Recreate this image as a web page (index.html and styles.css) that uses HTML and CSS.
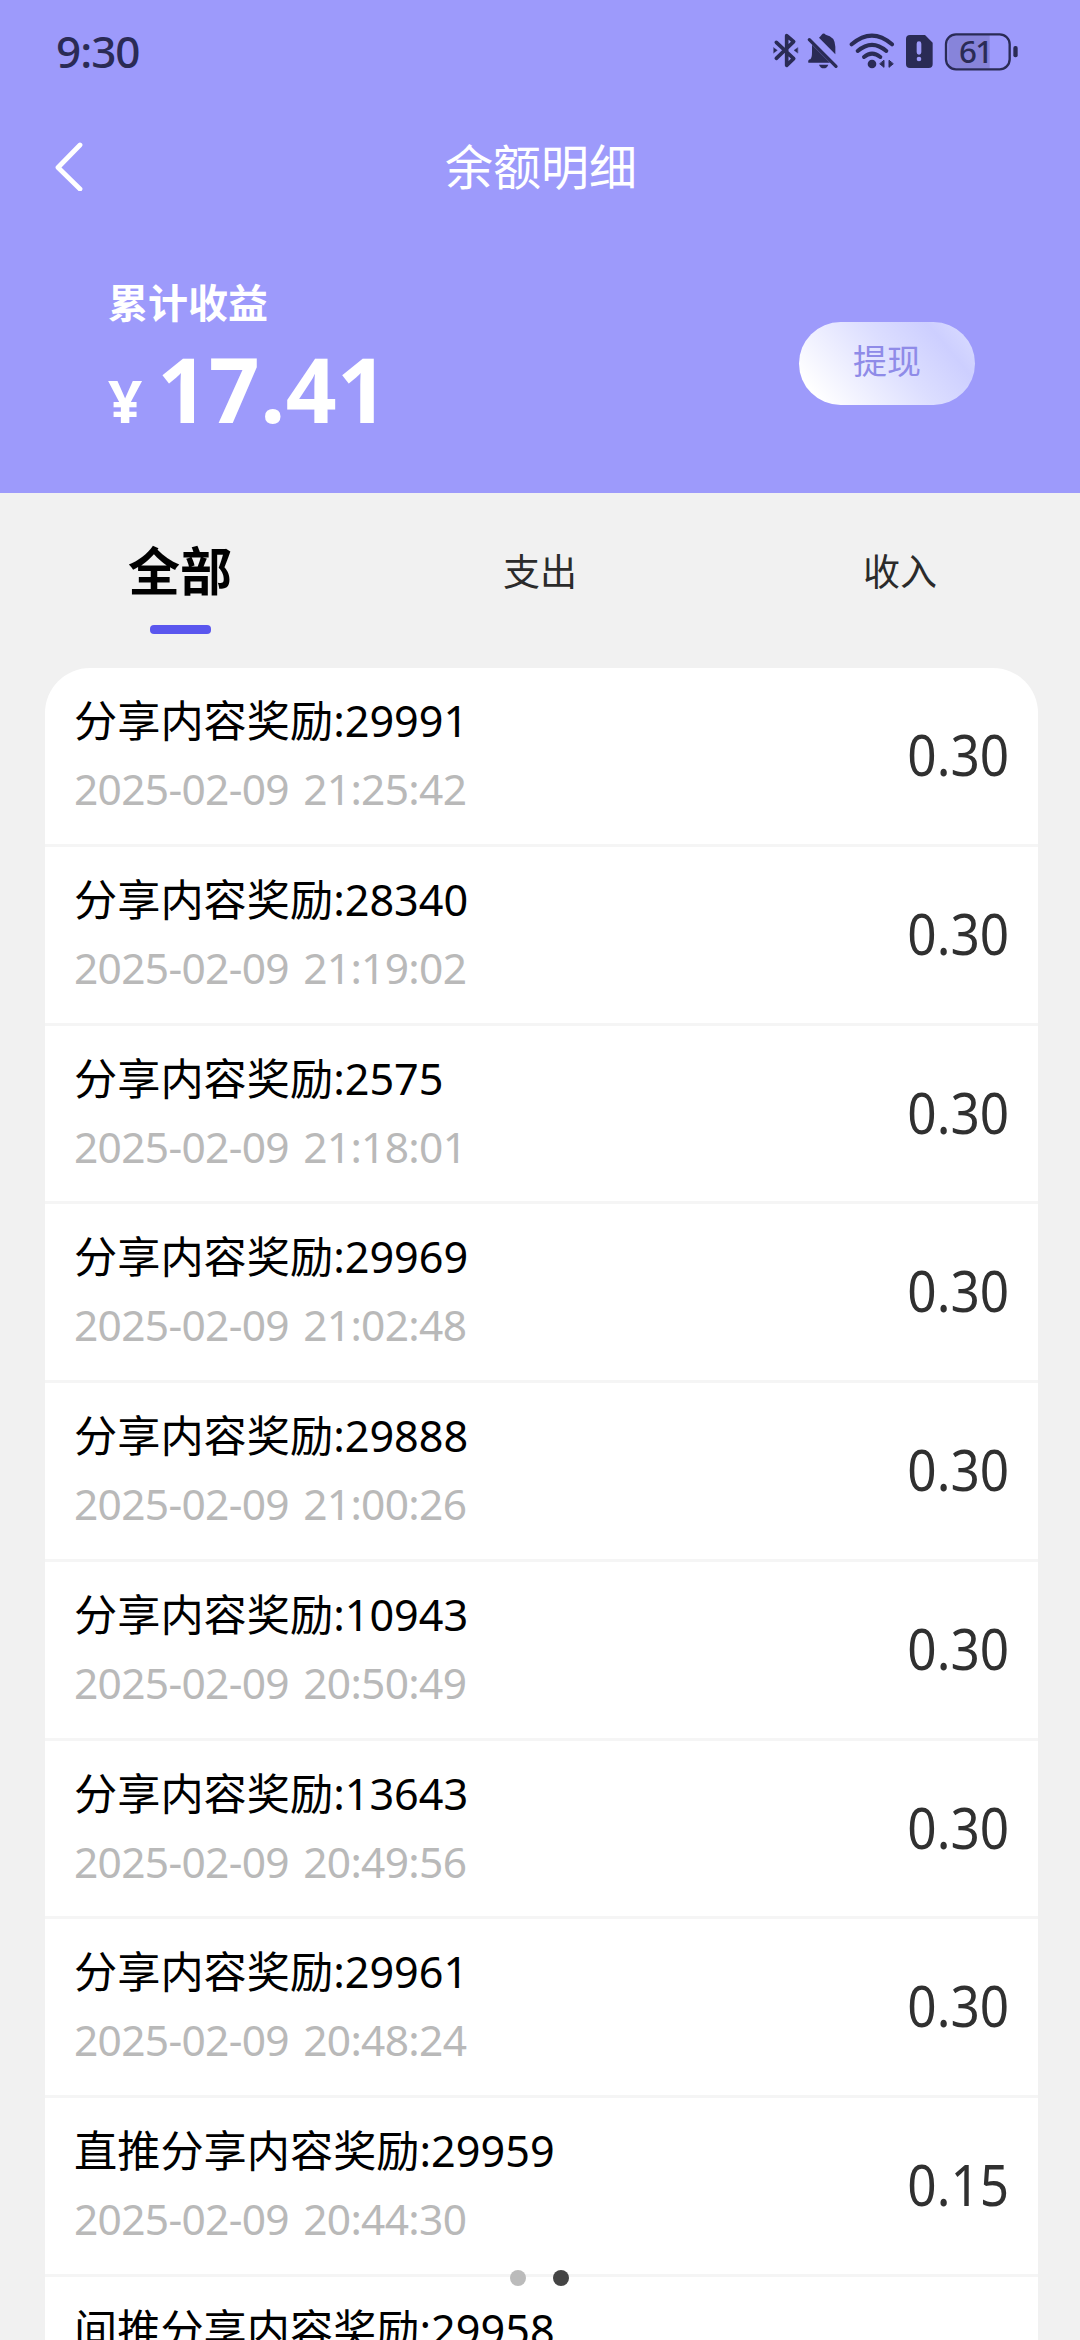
FILE: index.html
```html
<!DOCTYPE html>
<html lang="zh-CN">
<head>
<meta charset="utf-8">
<title>余额明细</title>
<link rel="stylesheet" href="styles.css">
</head>
<body>
<div class="screen">
  <header class="hero">
    <div class="status">
      <span class="clock">9:30</span>
      <svg class="status-icons" viewBox="0 0 750 120" width="250" height="40" fill="none" stroke="#2a2b55" stroke-linecap="round" stroke-linejoin="round">
        <g stroke-width="11">
          <path d="M10 34 62 83 41 103V14L62 32 10 82"/>
          <path d="M2 50 13 58 2 66ZM74 50 63 58 74 66Z" fill="#2a2b55" stroke-width="1"/>
        </g>
        <g fill="#2a2b55" stroke="none">
          <path d="M117 41 171 95H106Q104 86 112 85 117 80 117 64Z"/>
          <path d="M138 20Q143 16 146 11 152 4 158 11 186 16 187 47V70Z"/>
          <path d="M138 101H166Q162 112 152 112T138 101Z"/>
          <path d="M109 26 189 106" stroke="#2a2b55" stroke-width="10"/>
        </g>
        <g stroke-width="12">
          <path d="M236 40Q297-12 357 40"/>
          <path d="M254 60Q297 23 340 60"/>
          <path d="M273 78Q297 58 322 78"/>
          <circle cx="297" cy="99" r="13" fill="#2a2b55" stroke="none"/>
          <path d="M333 89V109L321 99ZM348 89V109L360 99Z" fill="#2a2b55" stroke-width="3"/>
        </g>
        <path d="M411 12H456L479 35V99Q479 111 467 111H411Q399 111 399 99V24Q399 12 411 12Z" fill="#2a2b55" stroke="none"/>
        <path d="M438 38V64M438 84V84" stroke="#9d9afb" stroke-width="14"/>
        <path d="M546 12H650V112H546Q526 112 526 92V32Q526 12 546 12Z" fill="#8784da" stroke="none"/>
        <rect x="519" y="10" width="191" height="105" rx="30" stroke-width="7"/>
        <rect x="721" y="45" width="13" height="34" rx="6" fill="#2a2b55" stroke="none"/>
        <text class="battery-level" x="607" y="96" text-anchor="middle">61</text>
      </svg>
    </div>
    <nav class="nav">
      <svg class="back" viewBox="0 0 30 50" width="30" height="50" fill="none" stroke="#fff" stroke-width="4.8" stroke-linecap="round" stroke-linejoin="round"><path d="M26 4 4 26.500 26 48"/></svg>
      <h1 class="nav-title">余额明细</h1>
    </nav>
    <section class="balance">
      <div class="balance-info">
        <div class="balance-label">累计收益</div>
        <div class="balance-amount"><span class="currency">¥</span><span class="value">17.41</span></div>
      </div>
      <div class="withdraw">提现</div>
    </section>
  </header>
  <div class="tabs">
    <div class="tab active">全部</div>
    <div class="tab">支出</div>
    <div class="tab">收入</div>
  </div>
  <main class="list">
    <div class="row"><div class="info"><div class="name">分享内容奖励:29991</div><div class="date">2025-02-09 21:25:42</div></div><div class="amount">0.30</div></div>
    <div class="row"><div class="info"><div class="name">分享内容奖励:28340</div><div class="date">2025-02-09 21:19:02</div></div><div class="amount">0.30</div></div>
    <div class="row"><div class="info"><div class="name">分享内容奖励:2575</div><div class="date">2025-02-09 21:18:01</div></div><div class="amount">0.30</div></div>
    <div class="row"><div class="info"><div class="name">分享内容奖励:29969</div><div class="date">2025-02-09 21:02:48</div></div><div class="amount">0.30</div></div>
    <div class="row"><div class="info"><div class="name">分享内容奖励:29888</div><div class="date">2025-02-09 21:00:26</div></div><div class="amount">0.30</div></div>
    <div class="row"><div class="info"><div class="name">分享内容奖励:10943</div><div class="date">2025-02-09 20:50:49</div></div><div class="amount">0.30</div></div>
    <div class="row"><div class="info"><div class="name">分享内容奖励:13643</div><div class="date">2025-02-09 20:49:56</div></div><div class="amount">0.30</div></div>
    <div class="row"><div class="info"><div class="name">分享内容奖励:29961</div><div class="date">2025-02-09 20:48:24</div></div><div class="amount">0.30</div></div>
    <div class="row"><div class="info"><div class="name">直推分享内容奖励:29959</div><div class="date">2025-02-09 20:44:30</div></div><div class="amount">0.15</div></div>
    <div class="row"><div class="info"><div class="name">间推分享内容奖励:29958</div></div></div>
  </main>
  <div class="pager"><i class="dot"></i><i class="dot current"></i></div>
</div>
</body>
</html>
```

FILE: styles.css
```css
* { box-sizing: border-box; }

body {
  margin: 0;
  background: #f1f1f1;
  font-family: "Noto Sans", "Noto Sans CJK SC", sans-serif;
}

.screen {
  position: relative;
  width: 1080px;
  height: 2340px;
  overflow: hidden;
}

.hero {
  height: 493px;
  background: #9d9afb;
  color: #fff;
}

.status {
  display: flex;
  align-items: center;
  justify-content: space-between;
  height: 102px;
  padding: 0 57px 0 56px;
  color: #2a2b55;
}

.clock {
  font-size: 44px;
  font-weight: 500;
  line-height: 60px;
  letter-spacing: -1px;
}

.battery-level {
  font-size: 94px;
  font-weight: 500;
  letter-spacing: -5px;
  fill: #2a2b55;
  stroke: none;
}

.nav {
  display: grid;
  grid-template-columns: 30px 1fr 30px;
  align-items: center;
  height: 128px;
  padding: 0 54px;
}

.nav-title {
  margin: 0;
  padding: 0 0 5px 2px;
  font: 400 48px/60px "Noto Sans CJK SC", sans-serif;
  text-align: center;
}

.balance {
  display: flex;
  align-items: flex-start;
  justify-content: space-between;
  padding: 46px 105px 0 108px;
}

.balance-label {
  font: 700 40px/50px "Noto Sans CJK SC", sans-serif;
}

.balance-amount {
  display: flex;
  align-items: baseline;
  gap: 15px;
  margin-top: 18px;
  font-weight: 700;
  line-height: 90px;
}

.currency { font-size: 60px; }

.value {
  font-size: 89px;
  letter-spacing: 0.5px;
}

.withdraw {
  width: 176px;
  height: 83px;
  margin-top: 46px;
  border-radius: 42px;
  background: linear-gradient(50deg, #fff 10%, #dcdeff 55%, #cdcfff 80%, #dcdeff 100%);
  color: #8f8be8;
  font: 400 34px/76px "Noto Sans CJK SC", sans-serif;
  text-align: center;
}

.tabs {
  display: grid;
  grid-template-columns: repeat(3, 1fr);
  height: 175px;
  padding-top: 38px;
}

.tab {
  color: #2b2b2b;
  font: 400 37px/78px "Noto Sans CJK SC", sans-serif;
  text-align: center;
}

.tab.active {
  color: #000;
  font-size: 52px;
  font-weight: 700;
  line-height: 76px;
}

.tab.active::after {
  content: "";
  display: block;
  width: 61px;
  height: 9px;
  margin: 18px auto 0;
  border-radius: 4px;
  background: #5a56ee;
}

.list {
  width: 993px;
  margin-left: 45px;
  border-radius: 45px 45px 0 0;
  background: #fff;
}

.row {
  display: flex;
  justify-content: space-between;
  height: 178.75px;
  padding: 23px 29px 0 29px;
  border-bottom: 3px solid #f5f5f5;
}

.name {
  color: #000;
  font-size: 43.2px;
  line-height: 60px;
}

.date {
  margin-top: 8px;
  color: #b9b9b9;
  font-size: 42.5px;
  line-height: 60px;
  letter-spacing: -0.7px;
  word-spacing: 4px;
}

.amount {
  margin-top: 33px;
  color: #303030;
  font-size: 57px;
  line-height: 60px;
  transform: scaleX(0.9);
  transform-origin: right center;
}

.pager {
  position: absolute;
  left: 510px;
  top: 2270px;
  display: flex;
  gap: 27px;
}

.dot {
  width: 16px;
  height: 16px;
  border-radius: 50%;
  background: #bbb;
}

.dot.current { background: #444; }
```
